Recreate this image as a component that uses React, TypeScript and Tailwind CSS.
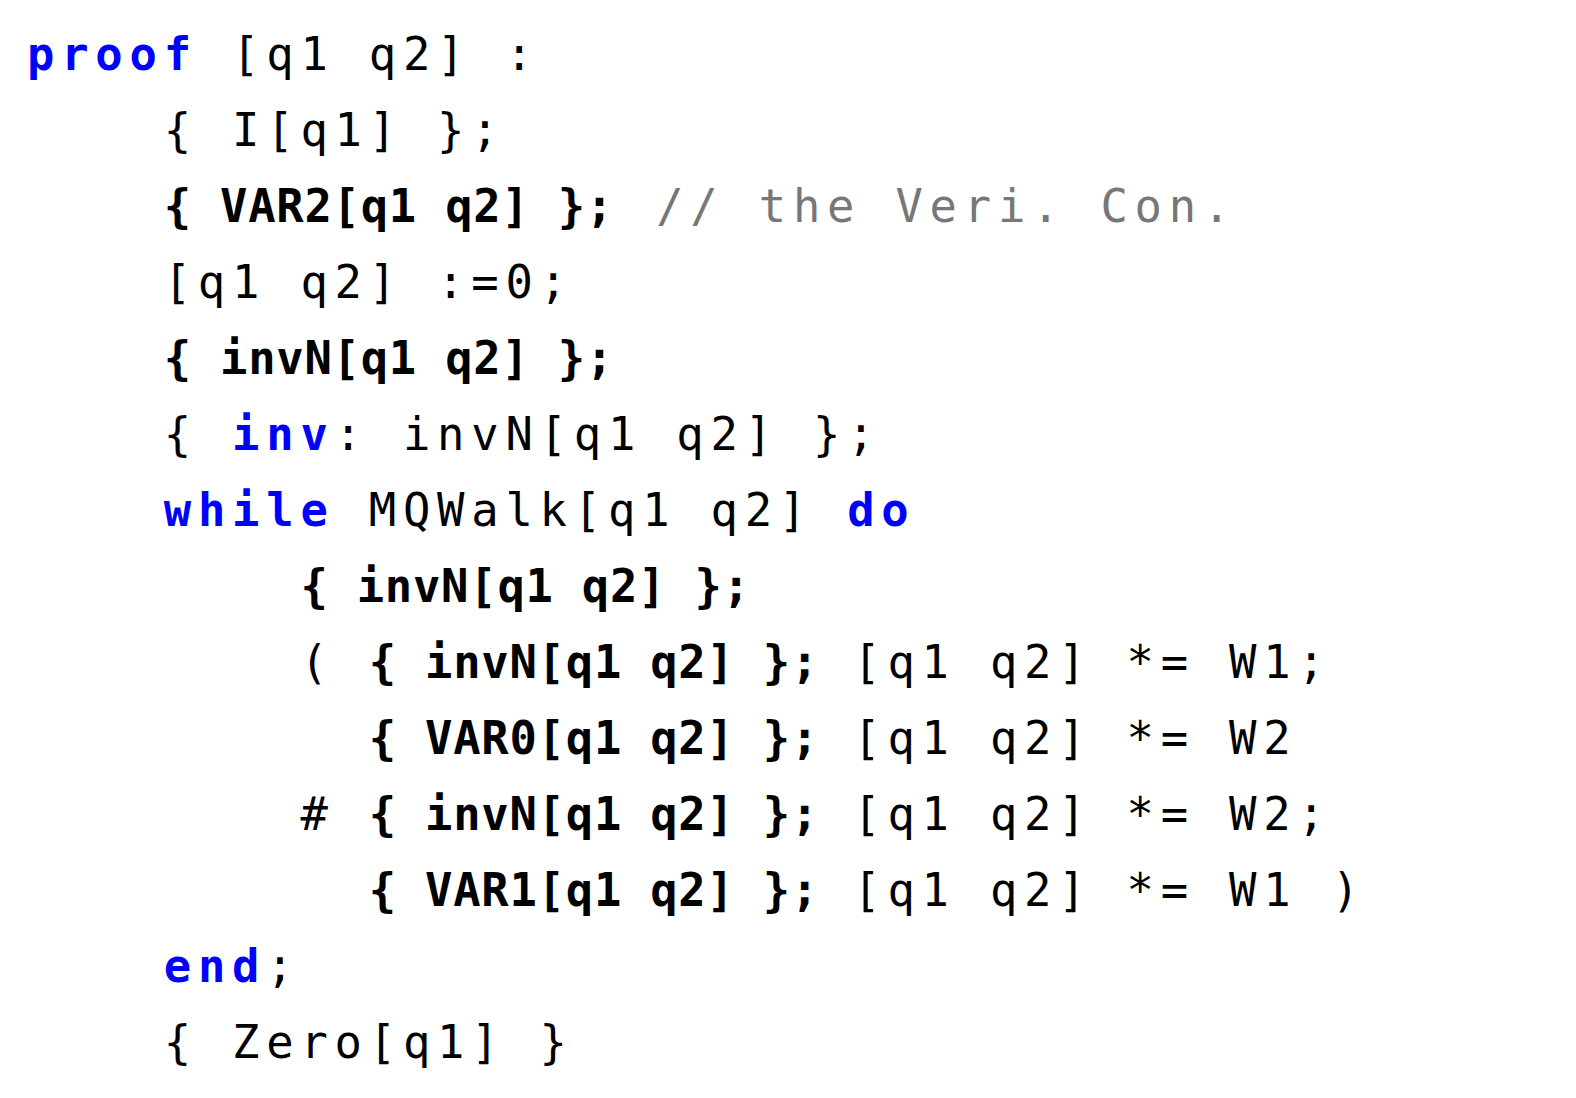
import React from "react";

type Seg = { t: string; s: "r" | "b" | "k" | "c" };
const r = (t: string): Seg => ({ t, s: "r" });
const b = (t: string): Seg => ({ t, s: "b" });
const k = (t: string): Seg => ({ t, s: "k" });
const c = (t: string): Seg => ({ t, s: "c" });

const lines: Seg[][] = [
  [k("proof"), r(" [q1 q2] :")],
  [r("    { I[q1] };")],
  [r("    "), b("{ VAR2[q1 q2] };"), r(" "), c("// the Veri. Con.")],
  [r("    [q1 q2] :=0;")],
  [r("    "), b("{ invN[q1 q2] };")],
  [r("    { "), k("inv"), r(": invN[q1 q2] };")],
  [r("    "), k("while"), r(" MQWalk[q1 q2] "), k("do")],
  [r("        "), b("{ invN[q1 q2] };")],
  [r("        ( "), b("{ invN[q1 q2] };"), r(" [q1 q2] *= W1;")],
  [r("          "), b("{ VAR0[q1 q2] };"), r(" [q1 q2] *= W2")],
  [r("        # "), b("{ invN[q1 q2] };"), r(" [q1 q2] *= W2;")],
  [r("          "), b("{ VAR1[q1 q2] };"), r(" [q1 q2] *= W1 )")],
  [r("    "), k("end"), r(";")],
  [r("    { Zero[q1] }")],
];

const cls: Record<Seg["s"], string> = {
  r: "tracking-[6.78px] text-black font-normal",
  b: "tracking-[0.75px] text-black font-bold",
  k: "tracking-[6.78px] text-[#0000ff] font-bold",
  c: "tracking-[6.78px] text-[#777777] font-normal ml-[8px]",
};

export default function App() {
  return (
    <div className="w-[1576px] h-[1098px] bg-white overflow-hidden pt-[17px] pl-[27px] font-['DejaVu_Sans_Mono',monospace] text-[45.5px]">
      {lines.map((line, i) => (
        <div key={i} className="h-[76px] leading-[76px] whitespace-pre">
          {line.map((seg, j) => (
            <span key={j} className={cls[seg.s]}>
              {seg.t}
            </span>
          ))}
        </div>
      ))}
    </div>
  );
}
